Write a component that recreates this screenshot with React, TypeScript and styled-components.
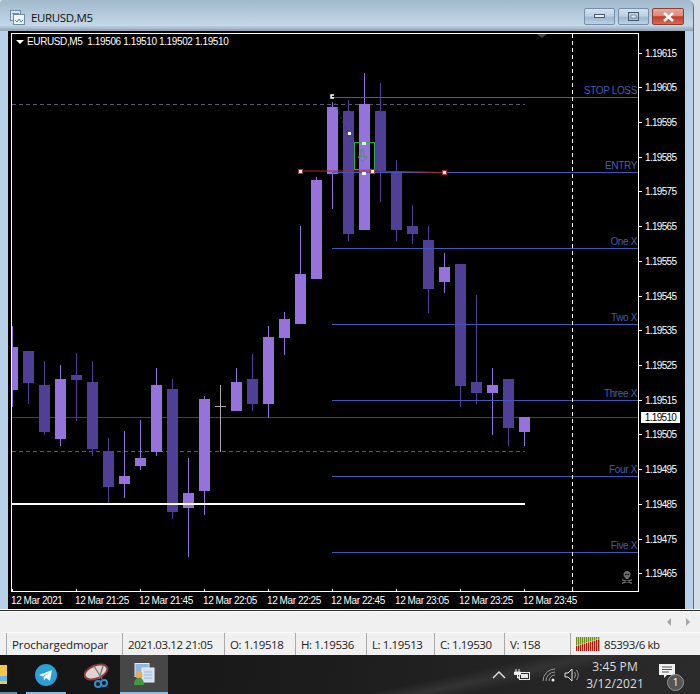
import React from "react";
import styled, { createGlobalStyle } from "styled-components";

const Global = createGlobalStyle`
  html, body { margin: 0; padding: 0; background: #c9dcee; }
  #root { width: 700px; height: 694px; overflow: hidden; }
`;

const Screen = styled.div`
  width: 700px; height: 694px; display: flex; flex-direction: column; overflow: hidden;
  font-family: "Liberation Sans", Arial, sans-serif; background: #f0f0f0;
`;
const WindowOuter = styled.div`
  height: 609px; flex: none; display: flex; background: #d3dde6;
`;
const WindowMain = styled.div`
  width: 694px; flex: none; box-sizing: border-box; display: flex; flex-direction: column;
  border-right: 1px solid #5c6d7c; border-top-right-radius: 7px; border-top-left-radius: 4px; overflow: hidden;
`;
const TitleBar = styled.div`
  height: 31px; flex: none; display: flex; align-items: center; padding: 3px 9px 0 10px; box-sizing: border-box;
  background: linear-gradient(#a2b9cc, #c3d7e8 82%, #97abbd 96%, #8fa3b5);
  gap: 5px;
`;
const TitleText = styled.span`
  font: 11.5px "Open Sans", sans-serif; color: #111; letter-spacing: -0.35px; flex: 1; margin-left: 1px;
`;
const CaptionGroup = styled.div` display: flex; gap: 3px; align-self: flex-start; margin-top: 5px; `;
const Caption = styled.div<{ $w: number; $close?: boolean }>`
  width: ${p => p.$w}px; height: 15px; border: 1px solid ${p => p.$close ? "#8a4238" : "#7590aa"}; border-radius: 2px;
  display: flex; align-items: center; justify-content: center;
  background: ${p => p.$close
    ? "linear-gradient(#e6a89c 0, #dc8a7a 45%, #c33b26 52%, #d56c52 100%)"
    : "linear-gradient(#d4e1ee 0, #bcd0e2 48%, #9db7cf 54%, #bcd2e6 100%)"};
`;
const Body = styled.div` flex: 1; display: flex; min-height: 0; `;
const SideFrame = styled.div`
  width: 8px; flex: none; background: #b9d1e8;
`;
const Terminal = styled.div`
  flex: 1; background: #000; display: grid; grid-template-columns: 628px 1fr; grid-template-rows: 559px 17px; padding: 2px 0 0 3px;
  align-content: start;
`;
const Plot = styled.div`
  position: relative; width: 628px; height: 559px; box-sizing: border-box; border: 1px solid #fff; overflow: hidden;
`;
const Legend = styled.div`
  position: absolute; left: 4px; top: 2px; display: flex; align-items: center; gap: 3px; color: #fff; font-size: 10px; letter-spacing: -0.38px; white-space: pre;
`;
const Triangle = styled.span`
  width: 0; height: 0; border-left: 4px solid transparent; border-right: 4px solid transparent; border-top: 4px solid #fff;
`;
const PriceAxis = styled.div`
  height: 559px; padding: 14px 0 12px; box-sizing: border-box; display: flex; flex-direction: column; justify-content: space-between; position: relative;
`;
const PriceRow = styled.div`
  display: flex; align-items: center; height: 12px; color: #fff; font-size: 10px; letter-spacing: -0.68px;
  &::before { content: ""; width: 3px; height: 1px; background: #fff; margin-right: 3px; }
`;
const PriceFlag = styled.div`
  position: absolute; left: 2px; top: 379px; width: 39px; height: 11px; background: #fff; color: #000; font-size: 10px; letter-spacing: -0.68px;
  display: flex; align-items: center; justify-content: center;
`;
const TimeAxis = styled.div` grid-column: 1 / 3; display: flex; `;
const TimeCell = styled.div`
  width: 64px; flex: none; color: #fff; font-size: 10px; letter-spacing: -0.43px; white-space: nowrap; position: relative; padding-top: 3px; line-height: 12px;
  &::before { content: ""; position: absolute; left: 1px; top: -3px; width: 1px; height: 3px; background: #fff; }
`;
const Divider = styled.div` height: 3px; flex: none; box-sizing: border-box; background: #2a2a2a; border-top: 1px solid #fff; border-bottom: 1px solid #fff; `;
const ScrollRow = styled.div`
  height: 20px; flex: none; background: #f0f0f0; display: flex; justify-content: flex-end; align-items: center; gap: 15px; padding-right: 10px;
`;
const ScrollArrow = styled.span<{ $left?: boolean }>`
  width: 0; height: 0; border-top: 4px solid transparent; border-bottom: 4px solid transparent;
  ${p => p.$left ? "border-right: 4px solid #a4a4a4;" : "border-left: 4px solid #a4a4a4;"}
`;
const StatusBar = styled.div`
  flex: none; display: flex; background: #f0f0f0; padding-left: 6px; border-top: 1px solid #fafafa; box-sizing: border-box; height: 23px;
`;
const StatusCell = styled.div<{ $w: number; $wide?: boolean }>`
  width: ${p => p.$w}px; flex: none; box-sizing: border-box; border-left: 1px solid #a9a9a9; padding-left: 5px; display: flex; align-items: center; gap: 4px;
  font: 11.5px "Open Sans", sans-serif; color: #222; letter-spacing: ${p => p.$wide ? "-0.1px" : "-0.4px"}; white-space: nowrap;
`;
const Taskbar = styled.div`
  flex: 1; display: flex; align-items: stretch; position: relative; overflow: hidden; color: #ddd;
  background:
    linear-gradient(168deg, transparent 62%, #333 68%, transparent 74%),
    linear-gradient(100deg, #141414, #1c1c1c 45%, #2b2b2b);
`;
const TaskSlot = styled.div<{ $w: number; $on?: boolean; $dim?: boolean }>`
  width: ${p => p.$w}px; flex: none; display: flex; align-items: center; justify-content: center; position: relative;
  background: ${p => p.$on ? "#474747" : "transparent"};
  &::after { content: ""; position: absolute; left: 0; right: 0; bottom: 0; height: 2px; background: ${p => p.$dim ? "#5d8cad" : "#85bde8"}; }
`;
const FolderSlot = styled(TaskSlot)` justify-content: flex-start; `;
const Spacer = styled.div` flex: 1; `;
const TaskBlank = styled.div<{ $w: number }>` width: ${p => p.$w}px; flex: none; `;
const Tray = styled.div` display: flex; align-items: center; gap: 8px; margin-right: 3px; position: relative; `;
const Clock = styled.div`
  width: 60px; margin: 0 7px 0 3px; align-self: center; text-align: center; color: #dcdcdc; font: 12px/17px "Open Sans", sans-serif; letter-spacing: 0.1px; position: relative;
`;
const Notify = styled.div` width: 32px; position: relative; display: flex; align-items: center; margin-right: 16px; `;
const NotifyBadge = styled.span`
  position: absolute; left: 15px; top: 19px; width: 15px; height: 15px; border-radius: 50%; border: 1px solid #999; background: #555; color: #fff; font: 10px/15px "Open Sans", sans-serif; text-align: center;
`;

type C = [number, number, number, number, number];
// [centre x, wick top, body top, body bottom, wick bottom]
const light: C[] = [
  [12.5, 326, 347, 390, 407], [60.5, 365, 379, 439, 446], [124.5, 431, 476, 484, 498], [140.5, 420, 458, 466, 470],
  [156.5, 368, 385, 452, 456], [188.5, 458, 493, 508, 557], [204.5, 396, 399, 491, 515], [236.5, 368, 382, 411, 411],
  [268.5, 326, 337, 404, 418], [284.5, 312, 319, 338, 355], [300.5, 226, 274, 324, 324], [316.5, 177, 180, 279, 279],
  [332.5, 102, 107, 174, 209], [364.5, 73, 104, 230, 230], [444.5, 253, 267, 282, 293], [492.5, 368, 385, 393, 435],
  [524.5, 417, 417, 432, 446],
];
const dark: C[] = [
  [28.5, 351, 351, 383, 404], [44.5, 361, 385, 432, 435], [76.5, 353, 375, 380, 421], [92.5, 361, 382, 449, 456],
  [108.5, 438, 451, 487, 503], [172.5, 379, 389, 512, 519], [252.5, 354, 379, 404, 411], [348.5, 100, 111, 234, 241],
  [380.5, 83, 111, 171, 202], [396.5, 160, 173, 230, 241], [412.5, 205, 226, 234, 244], [428.5, 226, 240, 289, 313],
  [460.5, 264, 264, 386, 407], [476.5, 295, 382, 393, 404], [508.5, 379, 379, 428, 446],
];
const levels: [number, string][] = [
  [97, "STOP LOSS"], [172, "ENTRY"], [248, "One X"], [324, "Two X"], [400, "Three X"], [476, "Four X"], [552, "Five X"],
];
const prices = ["1.19615","1.19605","1.19595","1.19585","1.19575","1.19565","1.19555","1.19545","1.19535","1.19525","1.19515","1.19505","1.19495","1.19485","1.19475","1.19465"];
const times = ["12 Mar 2021","12 Mar 21:25","12 Mar 21:45","12 Mar 22:05","12 Mar 22:25","12 Mar 22:45","12 Mar 23:05","12 Mar 23:25","12 Mar 23:45"];

const LIGHT = "#9673dc", DARK = "#4f3f96";
const Candle = ({ c, fill }: { c: C; fill: string }) => (
  <g>
    <line x1={c[0]} x2={c[0]} y1={c[1]} y2={c[4]} stroke={fill} />
    <rect x={c[0] - 5.5} y={c[2]} width={11} height={c[3] - c[2]} fill={fill} />
  </g>
);
const Handle = ({ x, y }: { x: number; y: number }) => (
  <rect x={x - 2} y={y - 2} width={4} height={4} fill="#fff" stroke="#a33" strokeWidth={1} />
);

const ChartDrawing = () => (
  <svg width={626} height={557} viewBox="12 34 626 557" style={{ display: "block" }}>
    <line x1={12} x2={638} y1={417.5} y2={417.5} stroke="#444" />
    <line x1={12} x2={525} y1={104.5} y2={104.5} stroke="#5c5670" strokeDasharray="4 3" />
    <line x1={12} x2={525} y1={451.5} y2={451.5} stroke="#5c5670" strokeDasharray="4 3" />
    {light.map(c => <Candle key={c[0]} c={c} fill={LIGHT} />)}
    {dark.map(c => <Candle key={c[0]} c={c} fill={DARK} />)}
    <line x1={220.5} x2={220.5} y1={385} y2={452} stroke="#aaa" />
    <line x1={215} x2={226} y1={406.5} y2={406.5} stroke="#aaa" />
    {levels.map(([y, name]) => (
      <g key={y}>
        <line x1={332} x2={638} y1={y + 0.5} y2={y + 0.5} stroke="#4257b8" />
        <text x={637} y={y - 3} textAnchor="end" fill="#4a5cb0" fontSize={10} letterSpacing={-0.35} fontFamily="'Liberation Sans', sans-serif">{name}</text>
      </g>
    ))}
    <line x1={12} x2={525} y1={504} y2={504} stroke="#fff" strokeWidth={2} />
    <line x1={572.5} x2={572.5} y1={34} y2={591} stroke="#fff" strokeDasharray="4 3" />
    <line x1={335} y1={103} x2={354} y2={150} stroke="#3e3e70" strokeDasharray="2 3" />
    <path d="M300 171 L372 171 L444 172.5" stroke="#a52a2a" fill="none" />
    <rect x={354.5} y={142.5} width={20} height={27} fill="none" stroke="#2fa84a" />
    <path d="M361 150 h3 v7 h3 l-4.500 5 l-4.500 -5 h3 z" fill="none" stroke="#3a9a5a" />
    <rect x={348} y={132} width={3} height={3} fill="#fff" />
    <rect x={362} y={142} width={4} height={3} fill="#d8f5d8" />
    <rect x={362} y={172} width={4} height={3} fill="#fff" />
    <path d="M334 95 h-3 v3 h3" fill="none" stroke="#fff" strokeWidth={1.500} />
    <Handle x={300.5} y={171.5} /><Handle x={372.5} y={171.5} /><Handle x={444.5} y={172.5} />
    <g fill="#6c6c6c">
      <circle cx={627} cy={574.5} r={3.500} />
      <rect x={625.500} y={577} width={3} height={2} />
      <path d="M622 579 l10 3.500 v1.500 l-10 -3.500 z M632 579 l-10 3.500 v1.500 l10 -3.500 z" />
    </g>
    <circle cx={625.800} cy={574.500} r={0.800} fill="#000" />
    <circle cx={628.200} cy={574.500} r={0.800} fill="#000" />
    <path d="M537 34 h10 l-5 4 z" fill="#444" />
  </svg>
);

export default function App() {
  return (
    <Screen>
      <Global />
      <WindowOuter>
        <WindowMain>
          <TitleBar>
            <svg width="15" height="15" viewBox="0 0 15 15">
              <rect x="0.500" y="0.500" width="10" height="10" fill="#d9e6f2" stroke="#6d8aa8" />
              <path d="M2 3.500 h7" stroke="#6d8aa8" />
              <rect x="3.500" y="4.500" width="11" height="10" fill="#eef5fb" stroke="#6d8aa8" />
              <path d="M5 10 l2 2 l2 -3 l2 3 l2 -2" fill="none" stroke="#4a7fb5" />
            </svg>
            <TitleText>EURUSD,M5</TitleText>
            <CaptionGroup>
              <Caption $w={29}>
                <svg width="11" height="5"><rect x="0.500" y="0.500" width="10" height="3" fill="#e8eef4" stroke="#45586c" /></svg>
              </Caption>
              <Caption $w={29}>
                <svg width="11" height="9"><rect x="0.500" y="0.500" width="10" height="8" fill="none" stroke="#45586c" /><rect x="3" y="3" width="5" height="3" fill="#e8eef4" stroke="#45586c" strokeWidth="0.600" /></svg>
              </Caption>
              <Caption $w={30} $close>
                <svg width="13" height="10" viewBox="0 0 13 10"><path d="M2 1 L11 9 M11 1 L2 9" stroke="#fff" strokeWidth="2.600" /></svg>
              </Caption>
            </CaptionGroup>
          </TitleBar>
          <Body>
            <SideFrame />
            <Terminal>
              <Plot>
                <ChartDrawing />
                <Legend><Triangle />EURUSD,M5  1.19506 1.19510 1.19502 1.19510</Legend>
              </Plot>
              <PriceAxis>
                {prices.map(p => <PriceRow key={p}>{p}</PriceRow>)}
                <PriceFlag>1.19510</PriceFlag>
              </PriceAxis>
              <TimeAxis>
                {times.map(t => <TimeCell key={t}>{t}</TimeCell>)}
              </TimeAxis>
            </Terminal>
            <SideFrame />
          </Body>
        </WindowMain>
      </WindowOuter>
      <Divider />
      <ScrollRow>
        <ScrollArrow $left /><ScrollArrow />
      </ScrollRow>
      <StatusBar>
        <StatusCell $w={116} $wide>Prochargedmopar</StatusCell>
        <StatusCell $w={102}>2021.03.12 21:05</StatusCell>
        <StatusCell $w={71}>O: 1.19518</StatusCell>
        <StatusCell $w={71}>H: 1.19536</StatusCell>
        <StatusCell $w={68}>L: 1.19513</StatusCell>
        <StatusCell $w={70}>C: 1.19530</StatusCell>
        <StatusCell $w={66}>V: 158</StatusCell>
        <StatusCell $w={130}>
          <svg width="24" height="14" viewBox="0 0 24 14">
            {Array.from({ length: 12 }, (_, i) => (
              <g key={i}>
                <rect x={i * 2} y={0} width={1.400} height={8.500 - i * 0.6} fill="#6f8f1c" />
                <rect x={i * 2} y={9 - i * 0.6} width={1.400} height={5 + i * 0.6} fill="#a01f12" />
              </g>
            ))}
          </svg>
          85393/6 kb
        </StatusCell>
      </StatusBar>
      <Taskbar>
        <FolderSlot $w={17} $dim>
          <svg width="8" height="20" viewBox="0 0 8 20"><path d="M0 0 h7 v19 h-7 z" fill="#f2c84b" /><path d="M0 11 h7 v5 h-7 z" fill="#6ab6e2" /></svg>
        </FolderSlot>
        <TaskBlank $w={9} />
        <TaskSlot $w={40}>
          <svg width="22" height="22" viewBox="0 0 22 22">
            <circle cx="11" cy="11" r="11" fill="#2a9fd8" />
            <path d="M4 11 L17 6 L15 17 L11 14 L9 16.500 L8.500 13 L14 8.500 L7.500 12.500 Z" fill="#eef8fd" />
          </svg>
        </TaskSlot>
        <TaskBlank $w={14} />
        <TaskBlank $w={40}>
          <svg width="26" height="26" viewBox="0 0 26 26" style={{ margin: "8px 0 0 4px", display: "block" }}>
            <ellipse cx="12" cy="9" rx="12" ry="6.500" transform="rotate(-22 12 9)" fill="#e2d3d3" stroke="#8a3c3c" strokeWidth="2" />
            <path d="M10 3 L18 16 M19 3 L15 16" stroke="#777" strokeWidth="1.300" />
            <circle cx="20" cy="20" r="3" fill="none" stroke="#2f8fd0" strokeWidth="2" />
            <circle cx="14" cy="21" r="3" fill="none" stroke="#2f8fd0" strokeWidth="2" />
          </svg>
        </TaskBlank>
        <TaskSlot $w={48} $on>
          <svg width="22" height="23" viewBox="0 0 22 23">
            <rect x="2" y="0.500" width="14" height="13" fill="#8fb6e0" stroke="#dfe9f4" />
            <rect x="9" y="5" width="12" height="14" fill="#cfe0f0" stroke="#eef4fa" />
            <path d="M11 9 h8 M11 12 h8 M11 15 h8" stroke="#9bb8d4" />
            <circle cx="6" cy="12" r="3.500" fill="#e8a860" />
            <path d="M1 22 q0 -7 5 -7 q5 0 5 7 z" fill="#3f9a38" />
          </svg>
        </TaskSlot>
        <Spacer />
        <Tray>
          <svg width="14" height="9" viewBox="0 0 14 9"><path d="M1 8 L7 2 L13 8" fill="none" stroke="#e6e6e6" strokeWidth="1.400" /></svg>
          <svg width="17" height="12" viewBox="0 0 17 12">
            <rect x="5.500" y="3.500" width="10" height="7" fill="none" stroke="#e6e6e6" /><rect x="7" y="5" width="7" height="4" fill="#e6e6e6" />
            <path d="M2 0 v3 M5 0 v3 M0.500 3 h6 v2.500 h-6 z M3.500 6 v3 h2" stroke="#f0f0f0" fill="#f0f0f0" />
          </svg>
          <svg width="14" height="14" viewBox="0 0 14 14" style={{ marginLeft: 3 }}>
            <path d="M1 13 A12 12 0 0 1 13 1 M4 13 A9 9 0 0 1 13 4 M7 13 A6 6 0 0 1 13 7" fill="none" stroke="#9a9a9a" />
            <circle cx="11" cy="12" r="1.500" fill="#eee" />
          </svg>
          <svg width="15" height="14" viewBox="0 0 15 14">
            <path d="M1 5 h3 l4 -4 v12 l-4 -4 h-3 z" fill="none" stroke="#e6e6e6" />
            <path d="M10.500 4 q2 3 0 6 M12.500 2 q3.500 5 0 10" fill="none" stroke="#999" />
          </svg>
        </Tray>
        <Clock>3:45 PM<br />3/12/2021</Clock>
        <Notify>
          <svg width="17" height="15" viewBox="0 0 17 15" style={{ marginLeft: 7, marginTop: -7 }}>
            <path d="M0 0 h16 v11 h-8 l-3 3 v-3 h-5 z" fill="#f0f0f0" />
            <path d="M3 3 h10 M3 5.500 h10 M3 8 h7" stroke="#555" />
          </svg>
          <NotifyBadge>1</NotifyBadge>
        </Notify>
      </Taskbar>
    </Screen>
  );
}
